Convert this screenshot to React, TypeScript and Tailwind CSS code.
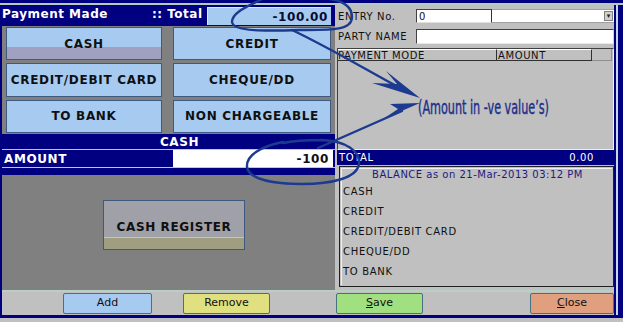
import React from 'react'

const navy = 'bg-[#000080]'

function ModeButton({ label, selected }: { label: string; selected?: boolean }) {
  return (
    <div
      className={
        'flex items-center justify-center border border-[#3f5a7e] text-[12px] font-bold tracking-[0.7px] text-[#101010] ' +
        (selected
          ? 'bg-[linear-gradient(#a6caf0_61%,#a0a0c0_61%)]'
          : 'bg-[#a6caf0]')
      }
    >
      {label}
    </div>
  )
}

function FooterButton({
  label,
  hot,
  color,
  className,
}: {
  label: string
  hot?: boolean
  color: string
  className: string
}) {
  return (
    <div
      className={
        'flex h-[21px] items-center justify-center rounded-[2px] border border-[#4a6f80] text-[11px] text-[#101010] ' +
        color +
        ' ' +
        className
      }
    >
      {hot ? (
        <span>
          <span className="underline">{label[0]}</span>
          {label.slice(1)}
        </span>
      ) : (
        label
      )}
    </div>
  )
}

function RightBorder() {
  return (
    <div className="flex w-[9px] shrink-0">
      <div className={'w-[2px] ' + navy} />
      <div className="w-[2px] bg-[#c8d8e0]" />
      <div className={'flex-1 ' + navy} />
    </div>
  )
}

export default function App() {
  const balanceRows = ['CASH', 'CREDIT', 'CREDIT/DEBIT CARD', 'CHEQUE/DD', 'TO BANK']

  return (
    <div className="relative flex h-[322px] w-[623px] flex-col overflow-hidden bg-[#c0c0c0] font-['DejaVu_Sans',sans-serif]">
      <div className={'h-[3px] ' + navy} />
      <div className="h-[2px] bg-[#b4ccc0]" />

      {/* main body */}
      <div className="flex h-[285px]">
        <div className={'w-[2px] ' + navy} />

        {/* left panel */}
        <div className="flex w-[333px] flex-col">
          <div className={'flex h-[21px] items-end pb-[1px] ' + navy}>
            <div className="mb-[2px] w-[150px] text-[12px] font-bold tracking-[0.5px] text-white">Payment Made</div>
            <div className="mb-[2px] w-[55px] text-[12px] font-bold tracking-[0.5px] text-white">:: Total</div>
            <div className="flex h-[18px] w-[124px] items-center justify-end border-t border-l border-[#d8e8f8] bg-[#a6caf0] pr-[3px] text-[12px] font-bold tracking-[0.6px] text-[#0a0a30]">
              -100.00
            </div>
          </div>

          <div className="grid h-[108px] grid-cols-[156px_158px] grid-rows-3 gap-x-[11px] gap-y-[3px] bg-[#808080] px-[4px] py-[1px]">
            <ModeButton label="CASH" selected />
            <ModeButton label="CREDIT" />
            <ModeButton label="CREDIT/DEBIT CARD" />
            <ModeButton label="CHEQUE/DD" />
            <ModeButton label="TO BANK" />
            <ModeButton label="NON CHARGEABLE" />
          </div>

          <div className={'flex h-[15px] items-center justify-center pl-[22px] text-[12px] font-bold tracking-[0.6px] text-white ' + navy}>
            CASH
          </div>
          <div className="h-[1px] bg-[#c0c8d0]" />
          <div className={'flex h-[17px] items-center ' + navy}>
            <div className="w-[171px] pl-[2px] text-[12px] font-bold tracking-[0.6px] text-white">AMOUNT</div>
            <div className="flex h-full w-[160px] items-center justify-end bg-white pr-[4px] text-[12px] font-bold tracking-[0.6px] text-[#101010]">
              -100
            </div>
          </div>
          <div className="h-[1px] bg-[#c0c8d0]" />
          <div className={'h-[7px] ' + navy} />

          <div className="flex-1 bg-[#808080] pt-[25px] pl-[101px]">
            <div className="flex h-[50px] w-[142px] flex-col border border-[#3f5a7e] bg-[#a0a0a8]">
              <div className="flex flex-1 items-end justify-center pb-[1px] text-[12px] font-bold tracking-[0.6px] text-[#101010]">
                CASH REGISTER
              </div>
              <div className="h-[1px] bg-[#c4c4bc]" />
              <div className="h-[11px] bg-[#a09e80]" />
            </div>
          </div>
        </div>

        {/* right panel */}
        <div className="flex w-[279px] flex-col pl-[2px] text-[10px] text-[#101010]">
          <div className="mt-[4px] flex h-[14px] items-center">
            <div className="w-[79px] pl-[1px] tracking-[0.6px]">ENTRY No.</div>
            <div className="flex h-full flex-1">
              <div className="flex w-[76px] items-center border border-t-[#404040] border-l-[#404040] border-r-[#303030] border-b-[#e0e0e0] bg-white pl-[2px]">
                0
              </div>
              <div className="flex flex-1 items-center justify-end border-t border-b border-[#a0a0a0] bg-white pr-[1px]">
                <div className="flex h-[10px] w-[9px] items-center justify-center border border-[#808080] bg-[#d4d0c8] text-[7px] leading-none text-[#202020]">
                  ▾
                </div>
              </div>
            </div>
          </div>

          <div className="mt-[6px] flex h-[15px] items-center">
            <div className="w-[79px] pl-[1px] tracking-[0.6px]">PARTY NAME</div>
            <div className="h-full flex-1 border border-t-[#404040] border-l-[#404040] border-r-[#d0d0d0] border-b-[#e8e8e8] bg-white" />
          </div>

          <div className="mt-[4px] flex h-[102px] flex-col border border-t-[#404040] border-l-[#404040] border-r-[#f0f0f0] border-b-[#f0f0f0] bg-[#c0c0c0]">
            <div className="flex h-[12px]">
              <div className="flex w-[159px] items-center border-r border-b border-[#303030] border-t border-t-white tracking-[0.6px]">
                PAYMENT MODE
              </div>
              <div className="flex w-[95px] items-center border-r border-b border-[#303030] border-t border-t-white pl-[1px] tracking-[0.6px]">
                AMOUNT
              </div>
              <div className="w-[20px] border-r border-b border-[#909090]" />
            </div>
          </div>

          <div className={'flex h-[15px] items-center justify-between pr-[20px] pl-[2px] text-white ' + navy}>
            <span className="tracking-[0.6px]">TOTAL</span>
            <span className="tracking-[0.6px]">0.00</span>
          </div>

          <div className="mt-[1px] ml-[2px] flex h-[121px] flex-col border border-[#202020] p-[1px]">
            <div className="flex flex-1 flex-col border border-[#f0f0f0] border-r-0 border-b-0 pl-[1px]">
              <div className="h-[12px] text-center leading-[12px] tracking-[0.5px] text-[#1a1a80]">BALANCE as on 21-Mar-2013 03:12 PM</div>
              <div className="mt-[5px] flex flex-col gap-[8px]">
                {balanceRows.map((r) => (
                  <div key={r} className="h-[12px] leading-[12px] tracking-[0.7px]">
                    {r}
                  </div>
                ))}
              </div>
            </div>
          </div>
        </div>

        <RightBorder />
      </div>

      {/* footer buttons */}
      <div className="flex h-[25px]">
        <div className={'w-[2px] ' + navy} />
        <div className="flex flex-1 border-t-2 border-[#b8d0c4] pt-[1px]">
          <FooterButton label="Add" color="bg-[#a6caf0]" className="ml-[61px] w-[89px]" />
          <FooterButton label="Remove" color="bg-[#e0e080]" className="ml-[31px] w-[87px]" />
          <FooterButton label="Save" hot color="bg-[#a0e080]" className="ml-[66px] w-[87px]" />
          <FooterButton label="Close" hot color="bg-[#e0a080]" className="ml-[107px] w-[84px]" />
        </div>
        <RightBorder />
      </div>
      <div className={'h-[3px] ' + navy} />
      <div className="flex-1 bg-[#c0c0c0]" />

      {/* hand-drawn annotation */}
      <svg className="pointer-events-none absolute inset-0" width="623" height="322" viewBox="0 0 623 322">
        <g fill="none" stroke="#1c3a8f" strokeWidth="2.4" strokeLinecap="round" strokeLinejoin="round">
          <path d="M 264 -2 C 252 5, 232 11, 232 22 C 233 32, 268 31, 300 30 C 330 30, 352 31, 352 17 C 352 6, 342 1, 330 -1" />
          <path d="M 292 30 C 330 48, 370 72, 400 88" />
          <path d="M 283 142 C 262 146, 246 155, 247 167 C 249 179, 272 184, 302 184 C 332 184, 357 178, 359 164 C 360 151, 346 141, 322 140 C 305 140, 292 141, 283 143" />
          <path d="M 318 148 C 345 136, 372 124, 402 111" />
        </g>
        <g fill="#1c3a8f">
          <polygon points="420,98 386,71 397,84 372,83" />
          <polygon points="420,103 390,104 398,109 383,119" />
        </g>
        <text
          x="418"
          y="114"
          fontSize="19"
          textLength="131"
          lengthAdjust="spacingAndGlyphs"
          fill="#1c2f8a"
          stroke="#1c2f8a"
          strokeWidth="0.4"
          fontFamily="'DejaVu Sans Condensed', 'Liberation Sans Narrow', sans-serif"
        >
          (Amount in -ve value’s)
        </text>
      </svg>
    </div>
  )
}
